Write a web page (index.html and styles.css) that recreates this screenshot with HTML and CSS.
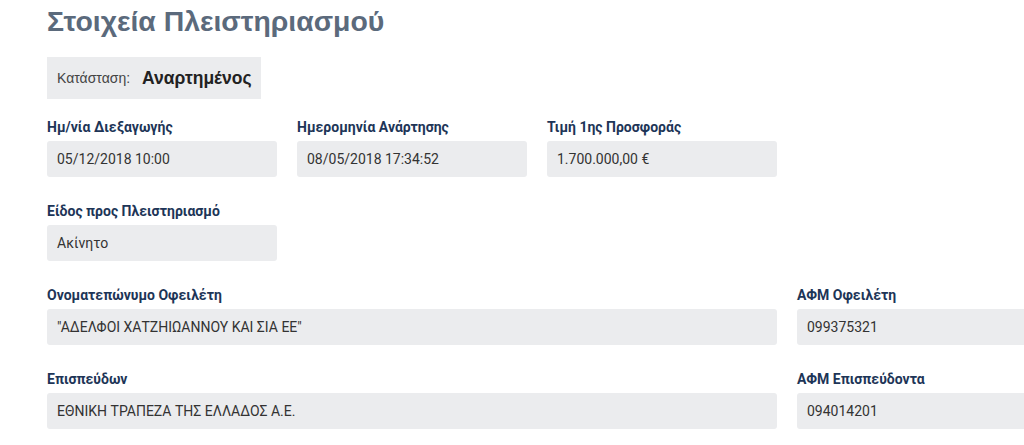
FILE: index.html
```html
<!DOCTYPE html>
<html lang="el">
<head>
<meta charset="utf-8">
<link rel="stylesheet" href="styles.css">
</head>
<body>
<div class="page">
  <h1 class="title">Στοιχεία Πλειστηριασμού</h1>
  <div class="status">
    <span class="status-label">Κατάσταση:</span>
    <span class="status-value">Αναρτημένος</span>
  </div>
  <div class="grid">
    <div class="field">
      <div class="label">Ημ/νία Διεξαγωγής</div>
      <div class="value">05/12/2018 10:00</div>
    </div>
    <div class="field">
      <div class="label">Ημερομηνία Ανάρτησης</div>
      <div class="value">08/05/2018 17:34:52</div>
    </div>
    <div class="field">
      <div class="label">Τιμή 1ης Προσφοράς</div>
      <div class="value">1.700.000,00 €</div>
    </div>
    <div class="field row-start">
      <div class="label">Είδος προς Πλειστηριασμό</div>
      <div class="value">Ακίνητο</div>
    </div>
    <div class="field wide">
      <div class="label">Ονοματεπώνυμο Οφειλέτη</div>
      <div class="value">"ΑΔΕΛΦΟΙ ΧΑΤΖΗΙΩΑΝΝΟΥ ΚΑΙ ΣΙΑ ΕΕ"</div>
    </div>
    <div class="field">
      <div class="label">ΑΦΜ Οφειλέτη</div>
      <div class="value">099375321</div>
    </div>
    <div class="field wide">
      <div class="label">Επισπεύδων</div>
      <div class="value">ΕΘΝΙΚΗ ΤΡΑΠΕΖΑ ΤΗΣ ΕΛΛΑΔΟΣ Α.Ε.</div>
    </div>
    <div class="field">
      <div class="label">ΑΦΜ Επισπεύδοντα</div>
      <div class="value">094014201</div>
    </div>
  </div>
</div>
</body>
</html>
```

FILE: styles.css
```css
html, body {
  margin: 0;
  padding: 0;
  background: #ffffff;
  overflow: hidden;
}
body {
  font-family: Roboto, "Liberation Sans", sans-serif;
  color: #333;
}
.page {
  padding: 1px 0 0 47px;
}
.title {
  margin: 0;
  font-family: "Liberation Sans", Arial, sans-serif;
  font-weight: 700;
  font-size: 28.4px;
  line-height: 40px;
  color: #5b6a7c;
  white-space: nowrap;
}
.status {
  display: inline-flex;
  align-items: center;
  margin-top: 16px;
  height: 42px;
  padding: 0 10px;
  background: #ebecee;
  box-sizing: border-box;
  width: 214px;
  font-family: "Liberation Sans", Arial, sans-serif;
}
.status-label {
  font-size: 14px;
  font-weight: 400;
  color: #444;
  margin-right: 12px;
}
.status-value {
  font-size: 17.5px;
  font-weight: 700;
  color: #222;
}
.grid {
  display: grid;
  grid-template-columns: repeat(4, 230px);
  column-gap: 20px;
  row-gap: 24px;
  margin-top: 18px;
  width: 980px;
}
.field {
  display: flex;
  flex-direction: column;
}
.row-start {
  grid-column: 1;
}
.wide {
  grid-column: 1 / span 3;
}
.label {
  font-size: 14px;
  font-weight: 700;
  line-height: 20px;
  color: #1d3557;
  margin-bottom: 4px;
  white-space: nowrap;
}
.value {
  height: 36px;
  line-height: 36px;
  padding: 0 10px;
  background: #ebecee;
  border-radius: 3px;
  font-size: 14px;
  color: #333;
  white-space: nowrap;
}
```
